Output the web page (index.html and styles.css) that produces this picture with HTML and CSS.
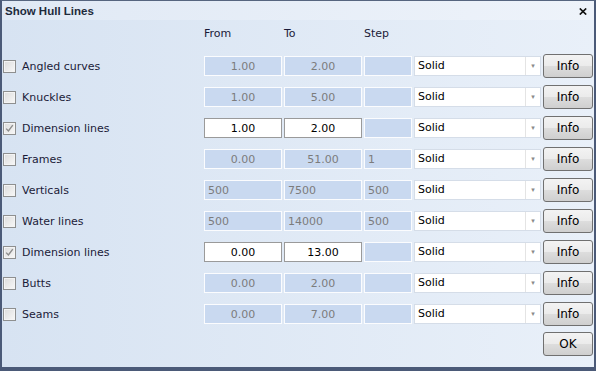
FILE: index.html
```html
<!DOCTYPE html>
<html lang="en">
<head>
  <meta charset="UTF-8" />
  <title>Show Hull Lines</title>
  <link rel="stylesheet" href="styles.css">
</head>
<body>
  <div class="window">
    <div class="titlebar">
      <span class="title">Show Hull Lines</span>
      <svg class="close" width="8" height="7" viewBox="0 0 8 7"><path d="M0.8 0.5 L7.2 6.5 M7.2 0.5 L0.8 6.5" stroke="#111" stroke-width="1.7"/></svg>
    </div>

    <div class="content">
      <div class="grid">
        <div class="head"></div>
        <div class="head">From</div>
        <div class="head">To</div>
        <div class="head">Step</div>
        <div class="head"></div>
        <div class="head"></div>

        <!-- Angled curves -->
        <label class="line"><span class="check"></span>Angled curves</label>
        <input class="field off center" type="text" value="1.00" disabled />
        <input class="field off center" type="text" value="2.00" disabled />
        <input class="field off" type="text" value="" disabled />
        <div class="combo"><span class="combo-text">Solid</span><span class="combo-arrow">&#9662;</span></div>
        <button class="btn">Info</button>

        <!-- Knuckles -->
        <label class="line"><span class="check"></span>Knuckles</label>
        <input class="field off center" type="text" value="1.00" disabled />
        <input class="field off center" type="text" value="5.00" disabled />
        <input class="field off" type="text" value="" disabled />
        <div class="combo"><span class="combo-text">Solid</span><span class="combo-arrow">&#9662;</span></div>
        <button class="btn">Info</button>

        <!-- Dimension lines -->
        <label class="line"><span class="check"><svg width="9" height="9" viewBox="0 0 9 9"><path d="M1.2 4.6 L3.4 7 L7.8 1.2" fill="none" stroke="#8c8c8c" stroke-width="1.4"/></svg></span>Dimension lines</label>
        <input class="field on center" type="text" value="1.00" />
        <input class="field on center" type="text" value="2.00" />
        <input class="field off" type="text" value="" disabled />
        <div class="combo"><span class="combo-text">Solid</span><span class="combo-arrow">&#9662;</span></div>
        <button class="btn">Info</button>

        <!-- Frames -->
        <label class="line"><span class="check"></span>Frames</label>
        <input class="field off center" type="text" value="0.00" disabled />
        <input class="field off center" type="text" value="51.00" disabled />
        <input class="field off" type="text" value="1" disabled />
        <div class="combo"><span class="combo-text">Solid</span><span class="combo-arrow">&#9662;</span></div>
        <button class="btn">Info</button>

        <!-- Verticals -->
        <label class="line"><span class="check"></span>Verticals</label>
        <input class="field off" type="text" value="500" disabled />
        <input class="field off" type="text" value="7500" disabled />
        <input class="field off" type="text" value="500" disabled />
        <div class="combo"><span class="combo-text">Solid</span><span class="combo-arrow">&#9662;</span></div>
        <button class="btn">Info</button>

        <!-- Water lines -->
        <label class="line"><span class="check"></span>Water lines</label>
        <input class="field off" type="text" value="500" disabled />
        <input class="field off" type="text" value="14000" disabled />
        <input class="field off" type="text" value="500" disabled />
        <div class="combo"><span class="combo-text">Solid</span><span class="combo-arrow">&#9662;</span></div>
        <button class="btn">Info</button>

        <!-- Dimension lines -->
        <label class="line"><span class="check"><svg width="9" height="9" viewBox="0 0 9 9"><path d="M1.2 4.6 L3.4 7 L7.8 1.2" fill="none" stroke="#8c8c8c" stroke-width="1.4"/></svg></span>Dimension lines</label>
        <input class="field on center" type="text" value="0.00" />
        <input class="field on center" type="text" value="13.00" />
        <input class="field off" type="text" value="" disabled />
        <div class="combo"><span class="combo-text">Solid</span><span class="combo-arrow">&#9662;</span></div>
        <button class="btn">Info</button>

        <!-- Butts -->
        <label class="line"><span class="check"></span>Butts</label>
        <input class="field off center" type="text" value="0.00" disabled />
        <input class="field off center" type="text" value="2.00" disabled />
        <input class="field off" type="text" value="" disabled />
        <div class="combo"><span class="combo-text">Solid</span><span class="combo-arrow">&#9662;</span></div>
        <button class="btn">Info</button>

        <!-- Seams -->
        <label class="line"><span class="check"></span>Seams</label>
        <input class="field off center" type="text" value="0.00" disabled />
        <input class="field off center" type="text" value="7.00" disabled />
        <input class="field off" type="text" value="" disabled />
        <div class="combo"><span class="combo-text">Solid</span><span class="combo-arrow">&#9662;</span></div>
        <button class="btn">Info</button>
      </div>

      <div class="footer">
        <button class="btn">OK</button>
      </div>
    </div>
  </div>
</body>
</html>
```

FILE: styles.css
```css
/* dialog look */
body {
  margin: 0;
  font-family: "DejaVu Sans", sans-serif;
  font-size: 11px;
  color: #1b1b38;
}

.window {
  box-sizing: border-box;
  width: 596px;
  height: 371px;
  border: 2px solid #4b5a78;
  border-top: 1px solid #56657f;
  border-bottom-width: 4px;
  background: linear-gradient(90deg, #d7e3f2, #e9f0f9);
  display: flex;
  flex-direction: column;
}

.titlebar {
  height: 19px;
  display: flex;
  align-items: center;
  justify-content: space-between;
  padding: 0 7px 0 3px;
  background: linear-gradient(90deg, #e0e9f5, #eef3fa);
}

.title {
  font-family: "Liberation Sans", sans-serif;
  font-size: 11.5px;
  font-weight: bold;
  color: #1e2a3c;
}

.close {
  margin-top: 2px;
}

.content {
  padding: 6px 1px 0 1px;
}

.grid {
  display: grid;
  grid-template-columns: 1fr 78px 78px 48px 127px 50px;
  grid-auto-rows: 24px;
  grid-template-rows: 21px;
  column-gap: 2px;
  row-gap: 7px;
  align-items: center;
}

.head {
  align-self: start;
  line-height: 14px;
  padding-top: 1px;
}

.line {
  display: flex;
  align-items: center;
  gap: 6px;
}

.check {
  box-sizing: border-box;
  width: 13px;
  height: 13px;
  border: 1px solid #8e8f8f;
  background: linear-gradient(135deg, #dcdcdc, #f8f8f8);
  box-shadow: inset 0 0 0 1px #f4f4f4;
  display: flex;
  align-items: center;
  justify-content: center;
}

.field {
  box-sizing: border-box;
  width: 100%;
  height: 20px;
  margin: 0;
  padding: 0 3px;
  font-family: inherit;
  font-size: 11px;
  outline: none;
}

.field.off {
  background: #c9d9f0;
  border: 1px solid #fbfcfe;
  color: #7c7c7c;
}

.field.on {
  background: #fff;
  border: 1px solid #9a9a9a;
  color: #000;
}

.center {
  text-align: center;
}

.combo {
  box-sizing: border-box;
  height: 20px;
  display: flex;
  background: #fff;
  border: 1px solid #d5dde8;
}

.combo-text {
  flex: 1;
  padding-left: 3px;
  line-height: 18px;
  color: #000;
}

.combo-arrow {
  width: 14px;
  border-left: 1px solid #e4e4e4;
  color: #8a8a8a;
  font-size: 7px;
  text-align: center;
  line-height: 18px;
}

.btn {
  box-sizing: border-box;
  width: 50px;
  height: 24px;
  padding: 0;
  font-family: inherit;
  font-size: 12px;
  color: #000;
  background: linear-gradient(#f3f3f3, #ebebeb 50%, #dddddd 51%, #cfcfcf);
  border: 1px solid #707070;
  border-radius: 3px;
}

.footer {
  display: flex;
  justify-content: flex-end;
  margin-top: 6px;
}
```
